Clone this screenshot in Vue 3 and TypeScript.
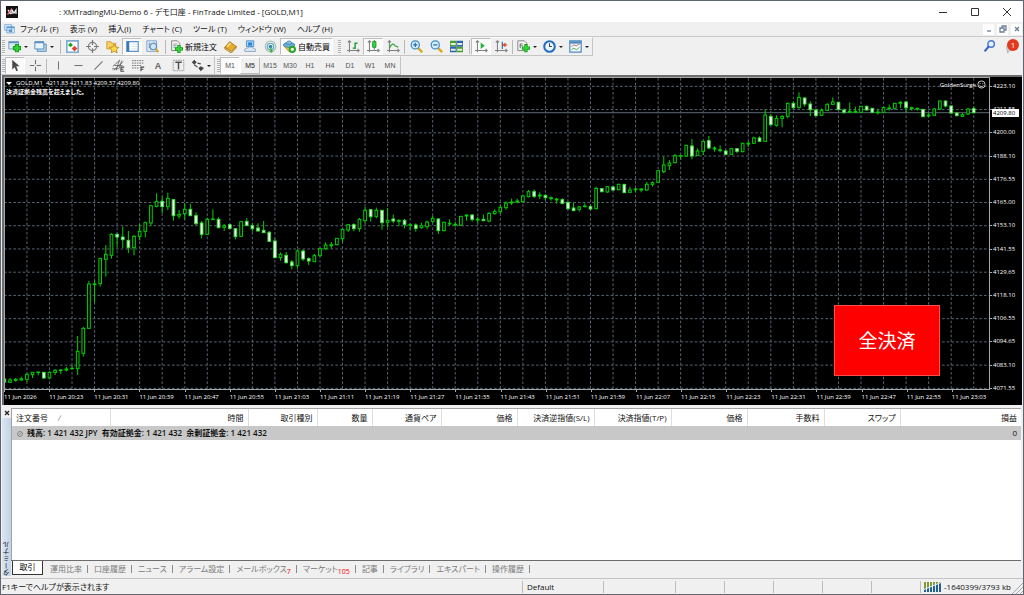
<script setup lang="ts">
import { ref } from 'vue'

type Bar = [high: number, top: number, bottom: number, low: number, falling?: 1]
interface Tool { icon?: string; name?: string; on?: boolean; more?: boolean; text?: string; sep?: boolean; tight?: boolean; grip?: boolean }

const menus = ['ファイル (F)', '表示 (V)', '挿入(I)', 'チャート (C)', 'ツール (T)', 'ウィンドウ (W)', 'ヘルプ (H)']

const icons: Record<string, string> = {
  docs: '<path d="M1 1h10v8H1zM4 4h11v9H4z" fill="#e4f0fb" stroke="#5b98cf"/><path d="M4 5h11M7 9h5M7 11h5" stroke="#5b98cf" stroke-width="2"/>',
  newChart: '<path d="M1 2h12v9H1z" fill="#dcecf8" stroke="#5d92bd"/><path d="M1 3h12" stroke="#5d92bd" stroke-width="2"/><path d="M6 10h10M11 5v10" stroke="#119a18" stroke-width="5"/><path d="M7 10h8M11 6v8" stroke="#33d036" stroke-width="3"/>',
  profiles: '<path d="M4 5h11v9H4z" fill="#b8d6ee" stroke="#4581b0"/><path d="M1 2h11v9H1z" fill="#eaf4fc" stroke="#4581b0"/><path d="M1 3h11" stroke="#5d92bd" stroke-width="2"/>',
  market: '<path d="M1 1h14v14H1z" fill="#fff" stroke="#7fa9cf" stroke-width="2"/><path d="M5.500 3l3 3-3 3-3-3z" fill="#16a522"/><path d="M10.500 7l3.500 3.500-3.500 3.500L7 10.500z" fill="#e2452b"/>',
  target: '<circle cx="8" cy="8" r="5" fill="none" stroke="#7b7b7b" stroke-width="1.500"/><path d="M8 0v6M8 10v6M0 8h6M10 8h6" stroke="#7b7b7b" stroke-width="1.500"/>',
  navigator: '<path d="M1 2h5l1 2h5v7H1z" fill="#f7d269" stroke="#c79427"/><path d="M10 5l1.800 3.700 4 .4-3 2.700.900 4-3.700-2-3.600 2 .8-4-3-2.700 4-.4z" fill="#ffdc4d" stroke="#b98414"/>',
  terminal: '<path d="M1 2h14v12H1z" fill="#fff" stroke="#5b93c6" stroke-width="1.500"/><path d="M1 2h3v12H1z" fill="#3878b4"/><path d="M7 5h7M7 8h7M7 11h7" stroke="#c9dcec"/>',
  tester: '<path d="M1 1h12v13H1z" fill="#e4eef7" stroke="#6898c4"/><path d="M4 3v7M7 5v6M10 3v5" stroke="#6b7f92"/><circle cx="9" cy="8" r="4" fill="#cfe6f8" stroke="#5d8cb5" stroke-width="1.500"/><path d="M12 11l3 4" stroke="#d9a024" stroke-width="2.500"/>',
  order: '<path d="M2 1h7l3 3v9H2z" fill="#f6f6f6" stroke="#707070"/><path d="M4 5h5M4 7h4M4 9h3" stroke="#8a8a8a"/><path d="M6 11h10M11 6v10" stroke="#119a18" stroke-width="4"/><path d="M7 11h8M11 7v8" stroke="#33d036" stroke-width="2.500"/>',
  book: '<path d="M1 9l6-7 8 6-6 7z" fill="#e9ad2c" stroke="#9a6a10"/><path d="M1 9v2l8 5 6-6V8l-6 6z" fill="#fff3c8" stroke="#9a6a10"/><path d="M4 8l4-4" stroke="#ffe08a" stroke-width="2"/>',
  mql: '<path d="M3 1h9v7H3z" fill="#a7d6f8" stroke="#3c88c6"/><path d="M5 3h5v4H5z" fill="#2f86cf"/><path d="M1 14c-1-3 2-5 4-4 1-2 5-2 6 0 3 0 4 2 3 4z" fill="#dfeaf4" stroke="#7297bb"/>',
  signal: '<circle cx="8" cy="8" r="6.500" fill="none" stroke="#a9c4b1" stroke-width="1.500"/><circle cx="8" cy="8" r="4" fill="#d1e9ee" stroke="#6aa9c4" stroke-width="1.500"/><circle cx="8" cy="8" r="2" fill="#2b75a8"/><path d="M8 8l3 6-2 2-2-2z" fill="#47b04d"/>',
  auto: '<path d="M1 7l7 8 6-8z" fill="#f2c43c" stroke="#b38214"/><ellipse cx="7.500" cy="6" rx="7" ry="3" fill="#6fb0dc" stroke="#3a7cab"/><path d="M4 5c0-5 7-5 7 0z" fill="#8cc4ea" stroke="#3a7cab"/><circle cx="11.500" cy="11.500" r="4.500" fill="#25a531"/><circle cx="11.500" cy="11.500" r="2" fill="#e9ffe6"/>',
  bars: '<path d="M3 1v14M0 13h15M1 3l2-2 2 2M13 11l2 2-2 2" fill="none" stroke="#808080" stroke-width="1.300"/><path d="M10 3v8M10 4h3M7 10h3" stroke="#259f35" stroke-width="1.800"/>',
  candles: '<path d="M3 1v14M0 13h15M1 3l2-2 2 2M13 11l2 2-2 2" fill="none" stroke="#808080" stroke-width="1.300"/><path d="M9 0v12" stroke="#168a22"/><path d="M7 2h4v7H7z" fill="#2edb3e" stroke="#168a22"/>',
  line: '<path d="M3 1v14M0 13h15M1 3l2-2 2 2M13 11l2 2-2 2" fill="none" stroke="#808080" stroke-width="1.300"/><path d="M3 10c3-6 5-6 7-3l4 2" fill="none" stroke="#36a344" stroke-width="1.500"/>',
  zoomIn: '<path d="M10 10l5 5" stroke="#d9a91e" stroke-width="3"/><circle cx="6.500" cy="6" r="5" fill="#d6edfc" stroke="#3d8ac6" stroke-width="1.500"/><path d="M4 6h5M6.500 3.500v5" stroke="#1f6fb0" stroke-width="1.500"/>',
  zoomOut: '<path d="M10 10l5 5" stroke="#d9a91e" stroke-width="3"/><circle cx="6.500" cy="6" r="5" fill="#d6edfc" stroke="#3d8ac6" stroke-width="1.500"/><path d="M4 6h5" stroke="#1f6fb0" stroke-width="1.500"/>',
  tile: '<path d="M0 1h8v7H0zM8 8h8v7H8z" fill="#4a9e2c"/><path d="M8 1h8v7H8zM0 8h8v7H0z" fill="#2d63b4"/><path d="M1 5h6M9 5h6M1 12h6M9 12h6" stroke="#e4f3d9" stroke-width="2.500"/>',
  scroll: '<path d="M3 1v14M0 13h15M1 3l2-2 2 2M13 11l2 2-2 2" fill="none" stroke="#808080" stroke-width="1.300"/><path d="M7 3l5 4-5 4z" fill="#25b13a"/>',
  shift: '<path d="M3 1v14M0 13h15M1 3l2-2 2 2M13 11l2 2-2 2" fill="none" stroke="#808080" stroke-width="1.300"/><path d="M9 2v9" stroke="#2f6fb0" stroke-width="1.500"/><path d="M15 6h-4M13 4l-3 2 3 2" fill="none" stroke="#d4502e" stroke-width="1.500"/>',
  indicator: '<path d="M1 1h8l3 3v9H1z" fill="#f6f6f6" stroke="#707070"/><path d="M4 10V5h3M3 7h4" fill="none" stroke="#777" stroke-width="1.300"/><path d="M6 10h10M11 5v10" stroke="#119a18" stroke-width="4"/><path d="M7 10h8M11 6v8" stroke="#33d036" stroke-width="2.500"/>',
  clock: '<circle cx="8" cy="8" r="6.500" fill="#eef6fd" stroke="#1f6cc0" stroke-width="2.500"/><path d="M8 4v4h3" fill="none" stroke="#444" stroke-width="1.300"/>',
  template: '<path d="M1 1h14v14H1z" fill="#f4fafe" stroke="#4f8ac0" stroke-width="1.500"/><path d="M1 3h14" stroke="#4f8ac0" stroke-width="3"/><path d="M3 8l3-2 3 1 4-2" fill="none" stroke="#b4583b"/><path d="M3 12l3-2 3 2 4-3" fill="none" stroke="#37963f"/>',
  cursor: '<path d="M4 1v12l3-3 2 5 2-1-2-5h4z" fill="#4a4a4a"/>',
  cross: '<path d="M8 1v5.500M8 9.500V15M1 8h5.500M9.500 8H15" stroke="#707070" stroke-width="1.300"/>',
  vline: '<path d="M8 3v10" stroke="#707070" stroke-width="1.300"/>',
  hline: '<path d="M3 8h10" stroke="#707070" stroke-width="1.300"/>',
  trend: '<path d="M3 13L13 3" stroke="#707070" stroke-width="1.300"/>',
  channel: '<path d="M1 9l9-8M2 14L14 3M0 12h9M3 8h10M5 14L9 2M9 11l3-9" stroke="#606060"/><path d="M15 10h-4v5h4M11 12.500h3" fill="none" stroke="#444" stroke-width="1.300"/>',
  fibo: '<path d="M0 2h14M0 5h14M0 8h12M0 11h9" stroke="#606060" stroke-dasharray="2 1"/><path d="M11 15v-5h4M11 12.500h3" fill="none" stroke="#444" stroke-width="1.300"/>',
  label: '<path d="M1.500 1.500h13v13h-13z" fill="none" stroke="#888" stroke-dasharray="2 1"/><path d="M4 4h8M8 4v9" stroke="#505050" stroke-width="1.800"/>',
  arrows: '<path d="M4 1l3 3-3 3-3-3zM12 9l4 2-4 4-3-4z" fill="#444"/><path d="M4 7l4 3M8 5l4 1" stroke="#444" stroke-width="1.500"/>',
  lens: '<circle cx="10" cy="5" r="4" fill="#e3f0ff" stroke="#4a77d4" stroke-width="1.800"/><path d="M7 8l-5 6" stroke="#3465cc" stroke-width="2.500"/>',
}

const mainTools: Tool[] = [
  { icon: 'newChart', name: '新規チャート', more: true }, { icon: 'profiles', name: 'プロファイル', more: true }, { sep: true },
  { icon: 'market', name: '気配値' }, { icon: 'target', name: 'データウィンドウ' }, { icon: 'navigator', name: 'ナビゲーター' },
  { icon: 'terminal', name: 'ターミナル', on: true }, { icon: 'tester', name: 'ストラテジーテスター' }, { sep: true },
  { icon: 'order', text: '新規注文' }, { icon: 'book', name: 'メタエディター' }, { icon: 'mql', name: 'クラウド' }, { icon: 'signal', name: 'シグナル' },
  { icon: 'auto', text: '自動売買', on: true }, { grip: true },
  { icon: 'bars', name: 'バーチャート' }, { icon: 'candles', name: 'ローソク足', on: true }, { icon: 'line', name: 'ラインチャート' }, { sep: true, tight: true },
  { icon: 'zoomIn', name: '拡大' }, { icon: 'zoomOut', name: '縮小' }, { icon: 'tile', name: '整列' }, { sep: true },
  { icon: 'scroll', name: '自動スクロール', on: true }, { icon: 'shift', name: 'チャートシフト' }, { sep: true, tight: true },
  { icon: 'indicator', name: 'インディケーター', more: true }, { icon: 'clock', name: '時間足', more: true }, { icon: 'template', name: '定型チャート', more: true },
]
const drawTools: Tool[] = [
  { icon: 'cursor', name: 'カーソル', on: true }, { icon: 'cross', name: 'クロスヘア' }, { sep: true, tight: true },
  { icon: 'vline', name: '垂直線' }, { icon: 'hline', name: '水平線' }, { icon: 'trend', name: 'トレンドライン' },
  { icon: 'channel', name: 'チャネル' }, { icon: 'fibo', name: 'フィボナッチ' }, { text: 'A', name: 'テキスト' },
  { icon: 'label', name: 'ラベル' }, { icon: 'arrows', name: '矢印', more: true },
]
const frames = ['M1', 'M5', 'M15', 'M30', 'H1', 'H4', 'D1', 'W1', 'MN']
const frame = ref('M1')

const prices = ['4223.10', '4211.55', '4200.00', '4188.10', '4176.55', '4165.00', '4153.10', '4141.55', '4129.65', '4118.10', '4106.55', '4094.65', '4083.10', '4071.55']
const times = ['11 Jun 2026', ...Array.from({ length: 21 }, (_, k) => {
  const m = 20 * 60 + 23 + k * 8
  return `11 Jun ${Math.floor(m / 60)}:${String(m % 60).padStart(2, '0')}`
})]

/* Chart units: three per screen pixel. Each run of bars has its own vertical base. */
const runs: { base: number; bars: Bar[] }[] = [
  { base: 540, bars: [
    [586, 597, 606, 608, 1], [594, 600, 607, 609], [594, 598, 601, 605], [590, 596, 600, 602], [580, 583, 598, 606], [577, 577, 584, 594],
    [576, 576, 578, 586], [577, 577, 594, 597, 1], [574, 577, 594, 596], [567, 571, 577, 585], [567, 570, 572, 582], [561, 567, 570, 574],
    [555, 565, 566, 568], [468, 514, 566, 585], [441, 445, 520, 530], [303, 312, 445, 447], [300, 312, 314, 367], [235, 235, 311, 320],
    [195, 223, 238, 290], [160, 163, 226, 236], [160, 163, 171, 200, 1], [140, 171, 179, 204, 1], [153, 181, 203, 219, 1], [165, 169, 203, 226],
    [132, 154, 169, 181], [125, 128, 154, 172], [75, 77, 129, 138], [40, 64, 79, 82], [50, 64, 80, 100, 1], [38, 55, 80, 90],
    [58, 59, 107, 122, 1], [90, 103, 108, 116], [69, 88, 101, 118], [71, 88, 107, 108, 1], [97, 107, 131, 136, 1], [123, 129, 163, 175, 1],
    [113, 118, 163, 165], [88, 117, 119, 119], [112, 118, 143, 145, 1], [132, 137, 142, 153], [132, 134, 145, 148, 1], [144, 146, 170, 178, 1],
    [124, 125, 169, 171], [114, 124, 136, 139, 1], [130, 137, 146, 155, 1], [130, 144, 153, 154, 1], [123, 151, 158, 159, 1], [153, 157, 184, 186, 1],
    [175, 183, 233, 235, 1], [217, 223, 233, 242], [216, 226, 248, 251, 1], [240, 246, 257, 268, 1], [208, 213, 257, 266], [208, 213, 237, 243, 1],
    [232, 236, 243, 255, 1], [222, 227, 245, 246], [203, 206, 227, 230], [187, 195, 206, 209], [186, 194, 197, 206], [175, 175, 194, 196],
    [146, 148, 176, 186], [132, 134, 150, 156], [130, 134, 146, 154, 1], [114, 118, 146, 155], [80, 91, 122, 130], [87, 89, 110, 125, 1],
    [83, 91, 109, 115], [90, 91, 128, 149, 1], [84, 121, 127, 142], [103, 117, 123, 130, 1], [118, 121, 124, 139], [117, 121, 133, 145, 1],
    [130, 134, 136, 152], [130, 135, 145, 155, 1], [128, 137, 143, 146], [122, 126, 140, 148], [108, 115, 124, 130], [114, 117, 152, 162, 1],
    [125, 127, 152, 154], [118, 130, 132, 137], [125, 133, 135, 140], [108, 109, 136, 138], [103, 105, 108, 122], [102, 105, 118, 125, 1],
  ] },
  { base: 480, bars: [
    [170, 178, 180, 190], [163, 178, 182, 183, 1], [156, 160, 183, 187], [148, 154, 161, 164], [135, 142, 155, 162], [124, 129, 143, 149],
    [116, 126, 129, 135], [116, 123, 126, 130], [105, 108, 125, 127], [90, 95, 110, 112], [88, 95, 109, 114, 1], [97, 105, 108, 117],
    [103, 106, 113, 120, 1], [109, 113, 116, 122], [114, 117, 120, 131], [115, 119, 130, 133, 1], [126, 127, 146, 149, 1], [128, 144, 152, 153, 1],
    [138, 141, 148, 155], [130, 138, 140, 142], [135, 140, 147, 149, 1], [80, 85, 146, 148], [84, 86, 95, 97, 1], [78, 80, 96, 98],
    [78, 81, 90, 92, 1], [71, 73, 89, 91], [72, 73, 98, 99, 1], [80, 90, 97, 98], [84, 87, 89, 97], [84, 87, 90, 97],
    [66, 73, 90, 93], [64, 68, 73, 80], [30, 32, 67, 69],
  ] },
  { base: 240, bars: [
    [230, 255, 275, 280], [240, 249, 257, 270], [222, 227, 248, 250], [225, 227, 229, 238], [195, 196, 228, 230], [177, 198, 228, 238, 1],
    [205, 213, 226, 228], [182, 184, 214, 225], [168, 182, 204, 208, 1], [199, 204, 207, 215], [196, 209, 212, 217], [210, 213, 223, 224, 1],
    [205, 206, 223, 225], [205, 206, 214, 220, 1], [188, 190, 215, 217], [183, 190, 192, 201], [170, 174, 190, 192], [169, 174, 184, 186, 1],
    [88, 105, 184, 186], [102, 109, 134, 137, 1], [106, 115, 136, 140], [106, 109, 115, 142], [68, 70, 109, 115], [65, 70, 83, 88, 1],
    [37, 52, 83, 85], [52, 54, 72, 80, 1], [64, 72, 89, 108, 1], [88, 90, 107, 109, 1], [85, 91, 106, 108], [70, 73, 91, 93],
    [52, 66, 73, 75], [66, 67, 89, 91, 1], [85, 90, 97, 101, 1], [67, 94, 97, 99], [80, 94, 97, 99], [78, 79, 97, 99],
    [77, 79, 90, 92, 1], [84, 85, 97, 99, 1], [86, 96, 98, 104], [80, 83, 97, 98], [74, 84, 86, 92], [69, 70, 85, 89],
    [64, 67, 70, 84], [64, 66, 83, 98, 1], [80, 83, 86, 92], [83, 85, 87, 92], [87, 88, 110, 112, 1], [98, 105, 108, 111],
    [84, 87, 106, 108], [62, 63, 87, 90], [62, 63, 78, 83, 1], [75, 78, 99, 102, 1], [97, 99, 107, 109, 1], [99, 104, 109, 110],
    [85, 87, 102, 105], [80, 86, 98, 100, 1],
  ] },
]
const pitch = 16.9065
const bars = runs.flatMap(r => r.bars.map(b => ({ high: b[0] + r.base, top: b[1] + r.base, height: Math.max(b[2] - b[1], 1), bottom: b[2] + r.base, low: b[3] + r.base, falling: b[4] === 1 })))
  .map((b, i) => ({ ...b, x: 13.2 + i * pitch }))
const gridX = Array.from({ length: 43 }, (_, k) => 13.2 + (k + 1) * pitch * 4)
const gridY = Array.from({ length: 14 }, (_, k) => 259 + k * 69.7)

const columns = [
  { label: '注文番号', w: 'w98' }, { label: '時間', w: 'w138' }, { label: '取引種別', w: 'w69' }, { label: '数量', w: 'w55' },
  { label: '通貨ペア', w: 'w69' }, { label: '価格', w: 'w76' }, { label: '決済逆指値(S/L)', w: 'w77' }, { label: '決済指値(T/P)', w: 'w77' },
  { label: '価格', w: 'w76' }, { label: '手数料', w: 'w77' }, { label: 'スワップ', w: 'w76' }, { label: '損益', w: '' },
]
const tabs = [
  { label: '取引' }, { label: '運用比率' }, { label: '口座履歴' }, { label: 'ニュース' }, { label: 'アラーム設定' }, { label: 'メールボックス', count: 7 },
  { label: 'マーケット', count: 105 }, { label: '記事' }, { label: 'ライブラリ' }, { label: 'エキスパート' }, { label: '操作履歴' },
]
const tab = ref('取引')
</script>

<template>
  <div class="window">
    <header class="title">
      <svg class="logo" viewBox="0 0 12 12" aria-hidden="true"><path d="M0 0h12v12H0z" fill="#111" /><path d="M2 4l3 4M5 4L2 8M6 8V4l2 3 2-3v4" fill="none" stroke="#eee" stroke-width="1.3" /><path d="M1 9l4-6" stroke="#d22" /></svg>
      <h1>: XMTradingMU-Demo 6 - デモ口座 - FinTrade Limited - [GOLD,M1]</h1>
      <div class="winbtns">
        <button aria-label="最小化"><svg viewBox="0 0 10 10"><path d="M1 5.500h8" /></svg></button>
        <button aria-label="最大化"><svg viewBox="0 0 10 10"><path d="M1.500 1.500h7v7h-7z" /></svg></button>
        <button aria-label="閉じる"><svg viewBox="0 0 10 10"><path d="M1 1l8 8M9 1L1 9" /></svg></button>
      </div>
    </header>

    <nav class="menu">
      <svg class="menuicon" viewBox="0 0 16 16" aria-hidden="true" v-html="icons.docs"></svg>
      <button v-for="m in menus" :key="m">{{ m }}</button>
      <div class="childbtns">
        <button aria-label="チャートを最小化"><svg viewBox="0 0 8 8"><path d="M2 6h4" /></svg></button>
        <button aria-label="チャートを元に戻す"><svg viewBox="0 0 8 8"><path d="M3 3V1h4v4H5M1 3h4v4H1z" /></svg></button>
        <button aria-label="チャートを閉じる"><svg viewBox="0 0 8 8"><path d="M2 2l4 4M6 2L2 6" /></svg></button>
      </div>
    </nav>

    <div class="bars">
      <div class="strip">
        <div class="group">
          <i class="grip"></i>
          <template v-for="(t, i) in mainTools" :key="i">
            <i v-if="t.sep" :class="['sep', { tight: t.tight }]"></i>
            <i v-else-if="t.grip" class="grip mid"></i>
            <button v-else :class="['tool', { on: t.on, labelled: t.text, more: t.more }]" :aria-label="t.name">
              <svg v-if="t.icon" viewBox="0 0 16 16" v-html="icons[t.icon]"></svg><span v-if="t.text">{{ t.text }}</span><b v-if="t.more"></b>
            </button>
          </template>
        </div>
        <div class="alerts">
          <button class="tool" aria-label="検索"><svg viewBox="0 0 16 16" v-html="icons.lens"></svg></button>
          <button class="tool bell" aria-label="通知"><svg viewBox="0 0 16 16"><path d="M2 9c0-4 9-4 9 0s-4 4-5 4l-3 3v-3c-1-1-1-2-1-4z" fill="#d6d6d6" stroke="#a9a9a9" /></svg><span class="badge">1</span></button>
        </div>
      </div>
      <div class="strip">
        <div class="group">
          <i class="grip"></i>
          <template v-for="(t, i) in drawTools" :key="i">
            <i v-if="t.sep" :class="['sep', { tight: t.tight }]"></i>
            <button v-else :class="['tool', { on: t.on, more: t.more }]" :aria-label="t.name">
              <svg v-if="t.icon" viewBox="0 0 16 16" v-html="icons[t.icon]"></svg><span v-if="t.text" class="letter">{{ t.text }}</span><b v-if="t.more"></b>
            </button>
          </template>
        </div>
        <div class="group">
          <i class="grip"></i>
          <button v-for="f in frames" :key="f" :class="['tool', 'frame', { on: f === frame, hot: f === 'M5' }]" @click="frame = f">{{ f }}</button>
        </div>
      </div>
    </div>

    <main class="chart">
      <div class="plotrow">
        <div class="plot">
          <svg viewBox="15 234 2952 933" preserveAspectRatio="none" aria-label="GOLD M1">
            <g class="grid">
              <path v-for="x in gridX" :key="x" :d="`M${x} 234V1170`" />
              <path v-for="y in gridY" :key="y" :d="`M12 ${y}H2967`" />
            </g>
            <path class="now" d="M12 338H2967" />
            <g v-for="b in bars" :key="b.x" class="bar" :class="{ falling: b.falling }">
              <path :d="`M${b.x} ${b.high}V${b.top}M${b.x} ${b.bottom}V${b.low}`" />
              <rect :x="b.x - 4" :y="b.top" width="8" :height="b.height" />
            </g>
          </svg>
          <p class="quote"><b></b>GOLD,M1&nbsp; 4211.83 4211.83 4209.37 4209.80</p>
          <p class="note">決済証拠金残高を超えました。</p>
          <p class="expert">GoldenSurge <svg viewBox="0 0 10 10"><circle cx="5" cy="5" r="4" /><path d="M3 4h1M6 4h1M3 6c1 2 3 2 4 0" /></svg></p>
          <button class="closeall">全決済</button>
        </div>
        <div class="prices">
          <span v-for="p in prices" :key="p">{{ p }}</span>
          <strong>4209.80</strong>
        </div>
      </div>
      <div class="times"><span v-for="t in times" :key="t">{{ t }}</span></div>
    </main>

    <section class="terminal">
      <aside>
        <button aria-label="ターミナルを閉じる"><svg viewBox="0 0 8 8"><path d="M2 2l4 4M6 2L2 6" /></svg></button>
        <span>ターミナル</span>
      </aside>
      <div class="panel">
        <div class="sheet">
          <table>
            <colgroup><col v-for="(c, i) in columns" :key="i" :class="c.w"></colgroup>
            <thead><tr><th v-for="(c, i) in columns" :key="i">{{ c.label }}<i v-if="i === 0">∕</i></th></tr></thead>
            <tbody><tr>
              <td colspan="11"><svg viewBox="0 0 8 8"><circle cx="4" cy="4" r="2.5" /><path d="M2 6l4-4" /></svg>残高: 1 421 432 JPY&nbsp; 有効証拠金: 1 421 432&nbsp; 余剰証拠金: 1 421 432</td>
              <td>0</td>
            </tr></tbody>
          </table>
        </div>
        <div class="tabs" role="tablist">
          <button v-for="t in tabs" :key="t.label" role="tab" :aria-selected="t.label === tab" :class="{ active: t.label === tab }" @click="tab = t.label">{{ t.label }}<sub v-if="t.count">{{ t.count }}</sub></button>
        </div>
      </div>
    </section>

    <footer class="status">
      <span class="help">F1キーでヘルプが表示されます</span>
      <span class="profile">Default</span><span class="c72"></span><span class="c49"></span><span class="c49"></span><span class="c49"></span><span class="c49"></span><span class="c49"></span>
      <span class="net">
        <svg viewBox="0 0 17 10"><path d="M0 0h17L0 7z" fill="#7d9a35" /><path d="M0 10V8l17-7v9z" fill="#20618f" /><path d="M2.500 0v10M5.500 0v10M8.500 0v10M11.500 0v10M14.500 0v10" stroke="#eef" /></svg>
        -1640399/3793 kb
      </span>
      <svg class="resize" viewBox="0 0 12 12"><path d="M1 12L12 1M5 12l7-7M9 12l3-3" /></svg>
    </footer>
  </div>
</template>

<style>
html, body, #app { margin: 0; height: 100%; }
</style>

<style scoped>
* { box-sizing: border-box; }
.window { height: 100vh; min-height: 400px; display: flex; flex-direction: column; overflow: hidden; background: #f0f0f0; border: 1px solid #5d6573; color: #111; font-family: "Open Sans", "Noto Sans CJK JP", sans-serif; font-size: 8px; line-height: 12px; font-feature-settings: "palt"; }
button { appearance: none; border: 0; margin: 0; padding: 0; background: none; color: inherit; font: inherit; font-feature-settings: inherit; white-space: nowrap; }
p { margin: 0; }

.title { flex: none; height: 21px; display: flex; align-items: center; background: #fff; }
.logo { width: 12px; height: 12px; margin-left: 5px; }
.title h1 { margin: 0 0 0 41px; font-size: 8px; font-weight: 400; white-space: nowrap; }
.winbtns { margin-left: auto; display: flex; }
.winbtns button { width: 32px; height: 20px; display: grid; place-items: center; }
.winbtns svg { width: 10px; height: 10px; fill: none; stroke: #333; }

.menu { flex: none; height: 14px; display: flex; align-items: center; gap: 11px; padding-left: 3px; }
.menuicon { width: 11px; height: 11px; margin-right: -6px; }
.childbtns { margin-left: auto; display: flex; gap: 3px; padding-right: 1px; }
.childbtns button { width: 11px; height: 11px; background: #fff; display: grid; place-items: center; }
.childbtns svg { width: 8px; height: 8px; fill: none; stroke: #6d8194; stroke-width: 1.3; }

.bars { flex: none; border-top: 1px solid #c9c9c9; }
.strip { height: 19px; display: flex; }
.group { display: flex; align-items: center; border: solid #c4c4c4; border-width: 0 1px 1px 0; border-top: 1px solid #fafafa; }
.grip { flex: none; width: 3px; height: 13px; margin: 0 0 0 1px; background: repeating-linear-gradient(#b4b4b4 0 1px, #f0f0f0 1px 2px); }
.grip.mid { margin: 0 2px 0 5px; }
.strip .group + .group .grip { margin: 0 0 0 2px; }
.sep { flex: none; width: 1px; height: 14px; margin: 0 1px 0 3px; background: #b9b9b9; }
.sep.tight { margin: 0 1px; }
.tool { flex: none; height: 17px; width: 20px; display: flex; align-items: center; justify-content: center; border: 1px solid transparent; }
.tool svg { flex: none; width: 13px; height: 13px; }
.tool.more { width: 26px; gap: 3px; }
.tool.more b { border: solid transparent; border-width: 2px 2px 0; border-top-color: #222; }
.tool.labelled { width: 53px; gap: 2px; color: #000; }
.tool.on { background: #fafafa; border-color: #bdbdbd #fff #fff #bdbdbd; }
.tool.hot { border-color: #fff #bdbdbd #bdbdbd #fff; color: #222; }
.frame { font-family: "Liberation Sans", sans-serif; font-size: 7px; color: #555; }
.letter { font-family: "Liberation Sans", sans-serif; font-size: 9px; font-weight: 700; color: #666; }
.alerts { margin-left: auto; display: flex; align-items: center; }
.bell { position: relative; width: 24px; }
.badge { position: absolute; right: 3px; top: 0; width: 12px; height: 12px; border-radius: 50%; background: #e23a20; color: #fff; font-size: 8px; line-height: 12px; }

.chart { flex: 1; min-height: 0; margin: 0 1px; display: flex; flex-direction: column; background: #000; border: solid #6d6d6d; border-width: 2px 0 0 2px; color: #fff; font-size: 6px; line-height: 8px; }
.plotrow { flex: 1; min-height: 0; display: flex; }
.plot { flex: 1; min-width: 0; position: relative; border: 1px solid #a8a8a8; }
.plot > svg { position: absolute; inset: 0; width: 100%; height: 100%; }
.grid path { stroke: #566472; stroke-width: 3; stroke-dasharray: 8 6; }
.now { stroke: #4a555e; stroke-width: 4; }
.bar path { stroke: #00d200; stroke-width: 3; }
.bar rect { fill: #000; stroke: #00d200; stroke-width: 3; }
.bar.falling rect { fill: #fff; stroke: #38e038; }
.quote, .note, .expert { position: absolute; white-space: nowrap; }
.quote { left: 1px; top: 1px; display: flex; align-items: center; }
.quote b { border: solid transparent; border-width: 3px 3px 0; border-top-color: #fff; margin-right: 4px; }
.note { left: 1px; top: 10px; font-weight: 700; }
.expert { right: 3px; top: 2px; display: flex; align-items: center; gap: 1px; }
.expert svg { width: 9px; height: 9px; fill: none; stroke: #ddd; }
.closeall { position: absolute; right: 49px; bottom: 13px; width: 106px; height: 71px; background: #f00; border: 1px solid #ff4d4d; color: #fff; font-size: 19px; line-height: 24px; font-feature-settings: normal; }
.prices { position: relative; flex: none; width: 32px; display: flex; flex-direction: column; justify-content: space-between; padding: 5px 0 0 3px; margin-bottom: -2px; }
.prices span { position: relative; }
.prices span::before { content: ""; position: absolute; left: -3px; top: 4px; width: 2px; height: 1px; background: #aaa; }
.prices strong { position: absolute; left: 2px; top: 32px; width: 27px; padding-left: 1px; background: #fff; color: #000; font-weight: 400; }
.times { flex: none; height: 15px; margin-right: 25px; display: grid; grid-template-columns: repeat(22, 1fr); padding-top: 3px; }
.times span { position: relative; white-space: nowrap; }
.times span::before { content: ""; position: absolute; left: 0; top: -3px; width: 1px; height: 2px; background: #aaa; }

.terminal { flex: none; height: 174px; display: flex; padding: 3px 2px 2px 1px; border-bottom: 1px solid #c4c4c4; }
aside { flex: none; width: 9px; display: flex; flex-direction: column; align-items: center; justify-content: space-between; }
aside button { width: 8px; height: 10px; }
aside svg { display: block; width: 8px; height: 8px; stroke: #222; stroke-width: 1.3; }
aside span { flex: 1; width: 100%; display: flex; justify-content: flex-start; align-items: center; writing-mode: vertical-rl; transform: rotate(180deg); font-size: 7px; line-height: 9px; background: linear-gradient(90deg, #c3d3e6, #d9e5f2); }
.panel { flex: 1; min-width: 0; display: flex; flex-direction: column; }
.sheet { flex: 1; background: #fff; border: solid #a2a2a2; border-width: 1px 0 0 1px; }
table { width: 100%; table-layout: fixed; border-collapse: collapse; }
th { height: 17px; padding: 0 4px; text-align: right; font-weight: 400; border-right: 1px solid #dedede; white-space: nowrap; }
th:first-child { text-align: left; }
th:last-child { border-right: 0; }
th i { margin-left: 10px; color: #888; }
td { height: 14px; padding: 0 4px; background: #c8c8c8; text-align: right; white-space: nowrap; }
td:first-child { text-align: left; font-weight: 600; }
td svg { width: 8px; height: 8px; margin-right: 3px; vertical-align: middle; fill: none; stroke: #888; }
.w55 { width: 55px; } .w69 { width: 69px; } .w76 { width: 76px; } .w77 { width: 77px; } .w98 { width: 98px; } .w138 { width: 138px; }
.tabs { flex: none; height: 16px; display: flex; align-items: center; border-top: 1px solid #6c6c6c; color: #7a7a7a; }
.tabs button { position: relative; height: 14px; padding: 0 6px; }
.tabs button:not(.active)::after { content: ""; position: absolute; right: 0; top: 3px; width: 1px; height: 8px; background: #8a8a8a; }
.tabs .active { margin: -2px 1px 0 1px; width: 31px; background: #fff; color: #000; border: solid #333; border-width: 0 1px 1px; }
.tabs sub { font-size: 7px; line-height: 7px; color: #f00; vertical-align: -2px; }

.status { flex: none; height: 15px; display: flex; align-items: center; }
.status > span { height: 12px; line-height: 12px; white-space: nowrap; border-left: 1px solid #bcbcbc; }
.status > .help { flex: 1; padding-left: 1px; border-left: 0; }
.profile { width: 81px; padding-left: 4px; }
.c72 { width: 72px; } .c49 { width: 49px; }
.net { width: 91px; display: flex; align-items: center; gap: 3px; padding-left: 3px; }
.net svg { width: 17px; height: 10px; }
.resize { width: 12px; height: 12px; align-self: flex-end; fill: none; stroke: #a8a8a8; }
</style>
